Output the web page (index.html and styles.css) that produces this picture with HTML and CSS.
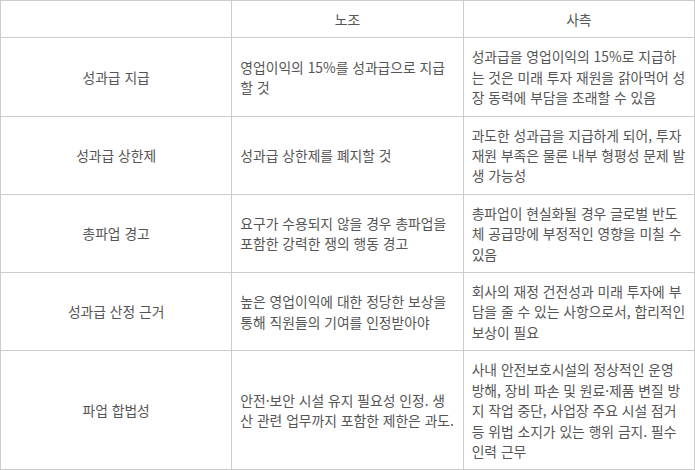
FILE: index.html
```html
<!DOCTYPE html>
<html lang="ko">
<head>
<meta charset="utf-8">
<title>노조 사측 비교</title>
<link rel="stylesheet" href="styles.css">
</head>
<body>
<table class="cmp">
  <thead>
    <tr>
      <th class="c-topic"></th>
      <th>노조</th>
      <th>사측</th>
    </tr>
  </thead>
  <tbody>
    <tr>
      <td class="c-topic">성과급 지급</td>
      <td>영업이익의 15%를 성과급으로 지급 할 것</td>
      <td>성과급을 영업이익의 15%로 지급하는 것은 미래 투자 재원을 갉아먹어 성장 동력에 부담을 초래할 수 있음</td>
    </tr>
    <tr>
      <td class="c-topic">성과급 상한제</td>
      <td>성과급 상한제를 폐지할 것</td>
      <td>과도한 성과급을 지급하게 되어, 투자 재원 부족은 물론 내부 형평성 문제 발생 가능성</td>
    </tr>
    <tr>
      <td class="c-topic">총파업 경고</td>
      <td>요구가 수용되지 않을 경우 총파업을 포함한 강력한 쟁의 행동 경고</td>
      <td>총파업이 현실화될 경우 글로벌 반도체 공급망에 부정적인 영향을 미칠 수 있음</td>
    </tr>
    <tr>
      <td class="c-topic">성과급 산정 근거</td>
      <td>높은 영업이익에 대한 정당한 보상을 통해 직원들의 기여를 인정받아야</td>
      <td>회사의 재정 건전성과 미래 투자에 부담을 줄 수 있는 사항으로서, 합리적인 보상이 필요</td>
    </tr>
    <tr>
      <td class="c-topic">파업 합법성</td>
      <td>안전·보안 시설 유지 필요성 인정. 생산 관련 업무까지 포함한 제한은 과도.</td>
      <td>사내 안전보호시설의 정상적인 운영 방해, 장비 파손 및 원료·제품 변질 방지 작업 중단, 사업장 주요 시설 점거 등 위법 소지가 있는 행위 금지. 필수 인력 근무</td>
    </tr>
  </tbody>
</table>
</body>
</html>
```

FILE: styles.css
```css
html, body {
  margin: 0;
  padding: 0;
  background: #fff;
}

body {
  font-family: "Noto Sans CJK KR", "Noto Sans", sans-serif;
  font-size: 13.8px;
  line-height: 20.4px;
  color: #555;
}

.cmp {
  width: 695px;
  border-collapse: collapse;
  table-layout: fixed;
}

.cmp th,
.cmp td {
  border: 1px solid #ccc;
  padding: 8px;
  vertical-align: middle;
  text-align: left;
}

.cmp th {
  font-weight: normal;
  text-align: center;
}

.cmp .c-topic {
  text-align: center;
}
```
